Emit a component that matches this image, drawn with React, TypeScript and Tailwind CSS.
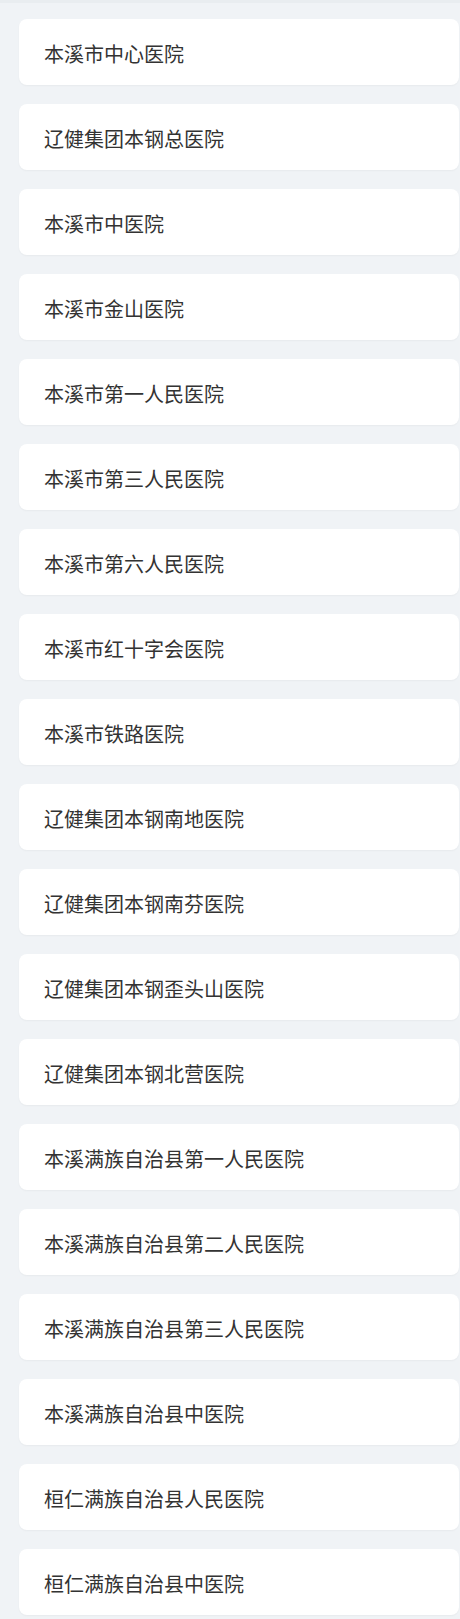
const hospitals = [
  "本溪市中心医院",
  "辽健集团本钢总医院",
  "本溪市中医院",
  "本溪市金山医院",
  "本溪市第一人民医院",
  "本溪市第三人民医院",
  "本溪市第六人民医院",
  "本溪市红十字会医院",
  "本溪市铁路医院",
  "辽健集团本钢南地医院",
  "辽健集团本钢南芬医院",
  "辽健集团本钢歪头山医院",
  "辽健集团本钢北营医院",
  "本溪满族自治县第一人民医院",
  "本溪满族自治县第二人民医院",
  "本溪满族自治县第三人民医院",
  "本溪满族自治县中医院",
  "桓仁满族自治县人民医院",
  "桓仁满族自治县中医院",
];

function HospitalCard({ name }: { name: string }) {
  return (
    <div className="flex h-[66px] items-center rounded-lg bg-white px-[25px] pt-[3px] shadow-[0_1px_2px_rgba(0,0,0,0.04)]">
      <span className="text-[20px] leading-none text-[#333]">{name}</span>
    </div>
  );
}

export default function App() {
  return (
    <div
      className="min-h-screen border-t-[3px] border-[#e9edf0] bg-[#f0f3f6] pb-[3px] pl-[19px] pr-px pt-[16px]"
      style={{ fontFamily: '"Noto Sans CJK SC", "Noto Sans", sans-serif' }}
    >
      <div className="flex flex-col gap-[19px]">
        {hospitals.map((h) => (
          <HospitalCard key={h} name={h} />
        ))}
      </div>
    </div>
  );
}
